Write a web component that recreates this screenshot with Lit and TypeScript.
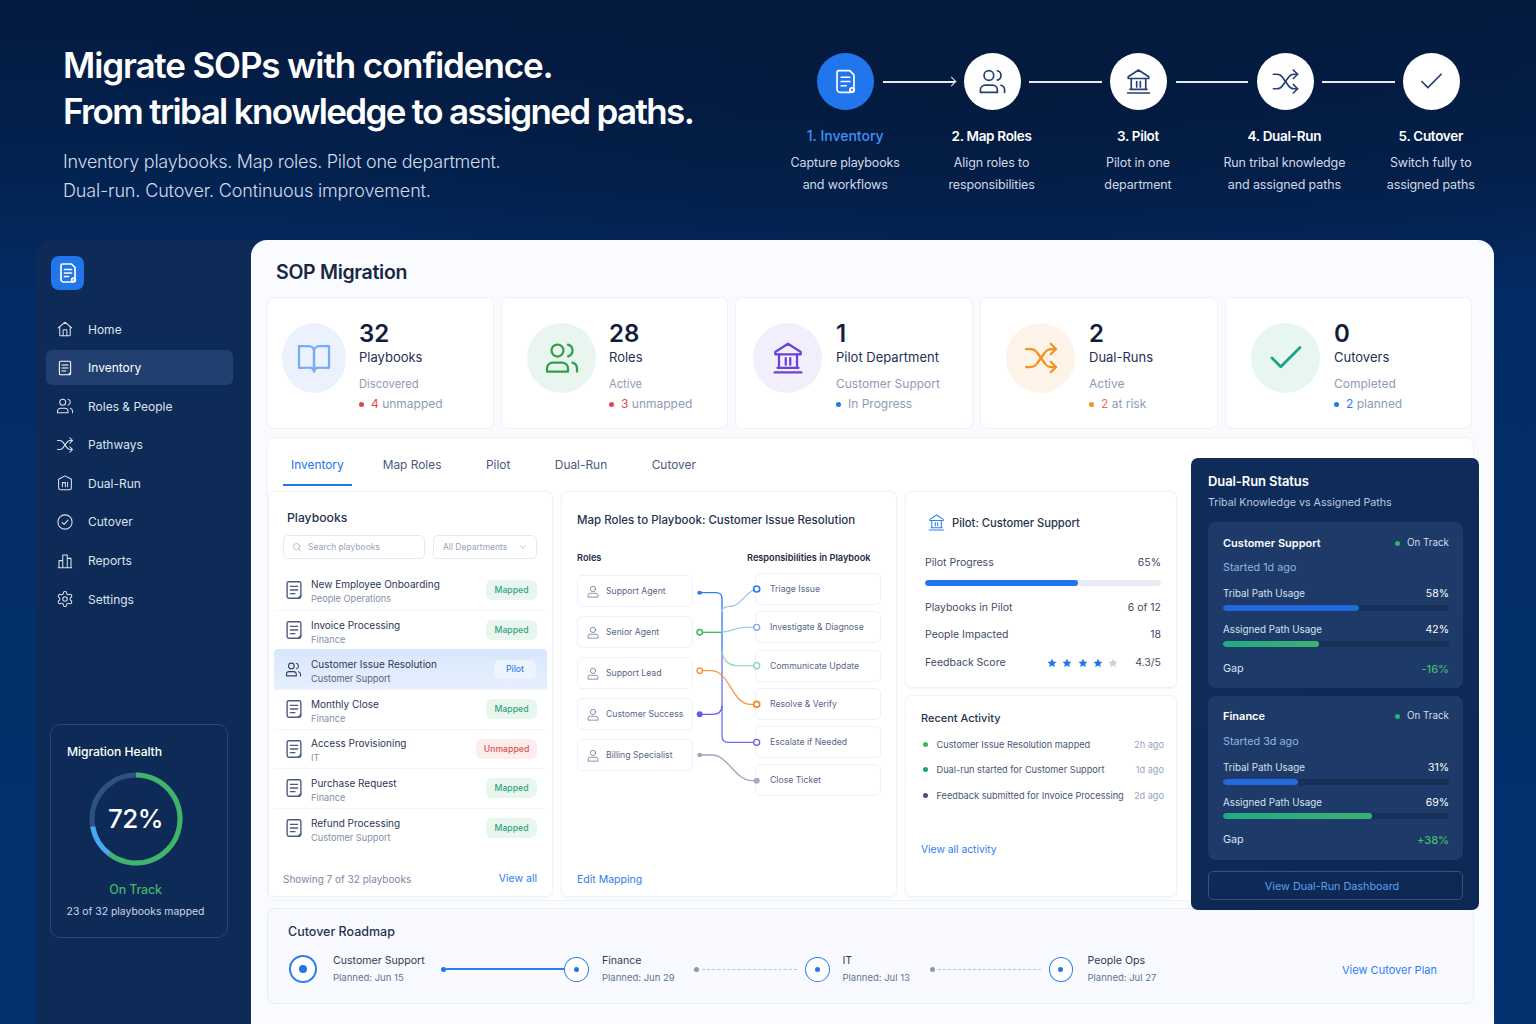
import { LitElement, html, css, svg } from "lit";
import { customElement } from "lit/decorators.js";

const ic = {
  doc: svg`<path d="M6.5 3h9l3.5 3.5V18a3 3 0 0 1-3 3H7.500a2.500 2.500 0 0 1-2.500-2.500V4.500A1.500 1.500 0 0 1 6.500 3z"/><path d="M8.500 8.500h7M8.500 12h7M8.500 15.500h4"/><circle cx="17.500" cy="19" r="1.800"/>`,
  list: svg`<rect x="4.500" y="3" width="15" height="18" rx="1.800"/><path d="M8 8h8M8 12h8M8 16h5"/><path d="M17 20.500l2.500-2.500"/>`,
  users: svg`<path d="M16 21v-2a4 4 0 0 0-4-4H6a4 4 0 0 0-4 4v2z"/><circle cx="9" cy="7" r="4"/><path d="M22 21v-2a4 4 0 0 0-3-3.870"/><path d="M16 3.130a4 4 0 0 1 0 7.750"/>`,
  bank2: svg`<path d="M12 2.500 3.500 8v1.500h17V8z"/><path d="M3 21.500h18M5 18.500h14M6 9.500v9M18 9.500v9M10.500 12v4.500M13.500 12v4.500"/>`,
  shuffle: svg`<path d="M2 6h3c2 0 3.500 1 4.500 2.500l5 7c1 1.500 2.500 2.500 4.500 2.500h3"/><path d="M2 18h3c2 0 3.500-1 4.500-2.500l5-7C15.500 7 17 6 19 6h3"/><path d="m18.500 2.500 3.500 3.500-3.500 3.500"/><path d="m18.500 14.500 3.500 3.500-3.500 3.500"/>`,
  check: svg`<path d="M20 6 9 17l-5-5"/>`,
  home: svg`<path d="M3 10.500 12 3l9 7.500"/><path d="M5 9v11a1 1 0 0 0 1 1h12a1 1 0 0 0 1-1V9"/><path d="M9.500 21v-7a1 1 0 0 1 1-1h3a1 1 0 0 1 1 1v7"/>`,
  book: svg`<path d="M2 4h6.500A3.500 3.500 0 0 1 12 7.500V21a3 3 0 0 0-3-2.500H2z"/><path d="M22 4h-6.500A3.500 3.500 0 0 0 12 7.500V21a3 3 0 0 1 3-2.500h7z"/>`,
  cycle: svg`<circle cx="12" cy="12" r="9.500"/><path d="m8 12.500 2.800 2.800L16 9.500"/>`,
  bars: svg`<path d="M3 21h18M4 21V11.500h5V21M9 21V4h6v17M15 21V8.500h5V21"/>`,
  dual: svg`<path d="M12 2.500 20.500 7v11.500a2.500 2.500 0 0 1-2.500 2.500H6a2.500 2.500 0 0 1-2.500-2.500V7z"/><path d="M8.500 17v-5.500h4V17M15.500 11v6"/>`,
  gear: svg`<path d="M12.220 2h-.44a2 2 0 0 0-2 2v.18a2 2 0 0 1-1 1.730l-.43.25a2 2 0 0 1-2 0l-.15-.08a2 2 0 0 0-2.730.73l-.22.38a2 2 0 0 0 .73 2.730l.15.1a2 2 0 0 1 1 1.720v.51a2 2 0 0 1-1 1.740l-.15.09a2 2 0 0 0-.73 2.730l.22.38a2 2 0 0 0 2.730.73l.15-.08a2 2 0 0 1 2 0l.43.25a2 2 0 0 1 1 1.730V20a2 2 0 0 0 2 2h.44a2 2 0 0 0 2-2v-.18a2 2 0 0 1 1-1.730l.43-.25a2 2 0 0 1 2 0l.15.08a2 2 0 0 0 2.730-.73l.22-.39a2 2 0 0 0-.73-2.730l-.15-.08a2 2 0 0 1-1-1.740v-.5a2 2 0 0 1 1-1.740l.15-.09a2 2 0 0 0 .73-2.730l-.22-.38a2 2 0 0 0-2.730-.73l-.15.08a2 2 0 0 1-2 0l-.43-.25a2 2 0 0 1-1-1.730V4a2 2 0 0 0-2-2z"/><circle cx="12" cy="12" r="3"/>`,
  search: svg`<circle cx="11" cy="11" r="7.500"/><path d="m21 21-4.500-4.500"/>`,
  chev: svg`<path d="m6 9 6 6 6-6"/>`,
  user: svg`<circle cx="12" cy="7.500" r="4.500"/><path d="M3.500 21v-2.500A3.500 3.500 0 0 1 7 15h10a3.500 3.500 0 0 1 3.500 3.500V21z"/>`,
};

const icon = (p: unknown, cls = "") =>
  html`<svg class="i ${cls}" viewBox="0 0 24 24" fill="none" stroke="currentColor" stroke-linecap="round" stroke-linejoin="round">${p}</svg>`;

const steps = [
  { i: ic.doc, t: "1. Inventory", a: "Capture playbooks", b: "and workflows", on: true },
  { i: ic.users, t: "2. Map Roles", a: "Align roles to", b: "responsibilities" },
  { i: ic.bank2, t: "3. Pilot", a: "Pilot in one", b: "department" },
  { i: ic.shuffle, t: "4. Dual-Run", a: "Run tribal knowledge", b: "and assigned paths" },
  { i: ic.check, t: "5. Cutover", a: "Switch fully to", b: "assigned paths" },
];
const nav = [
  { i: ic.home, t: "Home" },
  { i: ic.list, t: "Inventory", on: true },
  { i: ic.users, t: "Roles & People" },
  { i: ic.shuffle, t: "Pathways" },
  { i: ic.dual, t: "Dual-Run" },
  { i: ic.cycle, t: "Cutover" },
  { i: ic.bars, t: "Reports" },
  { i: ic.gear, t: "Settings" },
];
const stats = [
  { i: ic.book, c: "blue", n: "32", l: "Playbooks", s: "Discovered", d: "red", v: "4", r: " unmapped", vc: "red" },
  { i: ic.users, c: "green", n: "28", l: "Roles", s: "Active", d: "red", v: "3", r: " unmapped", vc: "red" },
  { i: ic.bank2, c: "purple", n: "1", l: "Pilot Department", s: "Customer Support", d: "blue", v: "", r: "In Progress", vc: "" },
  { i: ic.shuffle, c: "orange", n: "2", l: "Dual-Runs", s: "Active", d: "orange", v: "2", r: " at risk", vc: "coral" },
  { i: ic.check, c: "teal", n: "0", l: "Cutovers", s: "Completed", d: "blue", v: "2", r: " planned", vc: "blue" },
];
const books = [
  { n: "New Employee Onboarding", s: "People Operations", b: "Mapped" },
  { n: "Invoice Processing", s: "Finance", b: "Mapped" },
  { n: "Customer Issue Resolution", s: "Customer Support", b: "Pilot", on: true },
  { n: "Monthly Close", s: "Finance", b: "Mapped" },
  { n: "Access Provisioning", s: "IT", b: "Unmapped" },
  { n: "Purchase Request", s: "Finance", b: "Mapped" },
  { n: "Refund Processing", s: "Customer Support", b: "Mapped" },
];
const roles = ["Support Agent", "Senior Agent", "Support Lead", "Customer Success", "Billing Specialist"];
const resp = ["Triage Issue", "Investigate & Diagnose", "Communicate Update", "Resolve & Verify", "Escalate if Needed", "Close Ticket"];
const activity = [
  { t: "Customer Issue Resolution mapped", a: "2h ago", c: "green" },
  { t: "Dual-run started for Customer Support", a: "1d ago", c: "teal" },
  { t: "Feedback submitted for Invoice Processing", a: "2d ago", c: "navy" },
];
const runs = [
  { n: "Customer Support", s: "Started 1d ago", tv: "58%", tw: 60, av: "42%", aw: 42.5, g: "-16%", tight: false },
  { n: "Finance", s: "Started 3d ago", tv: "31%", tw: 33, av: "69%", aw: 66, g: "+38%", tight: true },
];

@customElement("app-root")
export class AppRoot extends LitElement {
  static styles = css`
    :host { display: block; width: 1536px; height: 1024px; overflow: hidden; font-family: Inter, "Liberation Sans", sans-serif; color: #1c2744; }
    * { box-sizing: border-box; }
    .page { width: 1536px; height: 1024px; overflow: hidden; background: radial-gradient(ellipse 900px 260px at 1000px 60px, #041a3e 0%, rgba(4,26,62,0) 100%), linear-gradient(180deg, #041a3f 0%, #03224f 16%, #032c66 30%, #03326f 100%); }
    .i { display: block; stroke-width: 1.6; flex: none; }

    .hero { height: 240px; display: flex; justify-content: space-between; padding-left: 63px; padding-right: 32px; }
    .intro { padding-top: 42px; white-space: nowrap; }
    h1 { margin: 0; font-size: 35px; line-height: 46px; font-weight: 600; color: #fff; letter-spacing: -1.65px; }
    h1 span { letter-spacing: -1.13px; }
    .lead { margin: 12.5px 0 0; font-size: 18px; line-height: 29px; font-weight: 300; color: #d0dbea; letter-spacing: -0.26px; }
    .lead span { letter-spacing: -0.14px; }
    .flow { width: 732px; padding-top: 53px; flex: none; }
    .dots { width: 643px; margin-left: 45px; display: flex; align-items: center; }
    .circle { width: 57px; height: 57px; border-radius: 50%; background: #fff; color: #27406f; display: flex; align-items: center; justify-content: center; flex: none; }
    .circle.on { background: #2176ee; color: #fff; }
    .circle .i { width: 29px; height: 29px; stroke-width: 1.4; }
    .conn { flex: 1; height: 2px; background: #e4e9f2; margin: 0 8.500px; position: relative; }
    .conn.arrow::after { content: ""; position: absolute; right: 0; top: -2.500px; width: 6px; height: 6px; border-top: 1.500px solid #e4e9f2; border-right: 1.500px solid #e4e9f2; transform: rotate(45deg); }
    .labels { display: grid; grid-template-columns: repeat(5, 146.400px); margin-top: 15.500px; text-align: center; }
    .lt { font-size: 13.500px; line-height: 20px; font-weight: 600; color: #fff; letter-spacing: -0.3px; }
    .lt.on { color: #3f93f5; font-weight: 500; font-size: 14px; letter-spacing: 0; }
    .ld { margin-top: 6px; font-size: 12.500px; line-height: 22px; color: #d0d9e8; font-weight: 400; letter-spacing: -0.12px; }

    .main { display: flex; height: 784px; padding-left: 36px; }
    .side { width: 231px; margin-right: -16px; background: #0e2a56; border-radius: 14px 0 0 0; padding: 16px 0 0 10px; flex: none; }
    .logo { width: 33px; height: 34px; margin-left: 5px; border-radius: 8px; background: #2176ee; color: #fff; display: flex; align-items: center; justify-content: center; }
    .logo .i { width: 24px; height: 24px; stroke-width: 1.7; }
    .nav { margin-top: 21.500px; width: 187px; display: flex; flex-direction: column; gap: 3.600px; }
    .ni { height: 35px; display: flex; align-items: center; gap: 14px; padding-left: 10px; border-radius: 6px; color: #dbe3f0; font-size: 12px; }
    .ni.on { background: #21406f; color: #fff; }
    .ni .i { width: 18px; height: 18px; stroke-width: 1.400; }
    .health { width: 178px; height: 214px; margin: 107.200px 0 0 4px; border: 1px solid #2a4673; border-radius: 10px; padding: 17px 23px 0 16px; display: flex; flex-direction: column; align-items: center; }
    .ht { align-self: flex-start; font-size: 12.200px; line-height: 20px; font-weight: 500; color: #fff; letter-spacing: -0.1px; }
    .ring { width: 94px; height: 94px; margin-top: 10px; display: grid; place-items: center; }
    .ring > * { grid-area: 1 / 1; }
    .ring b { font-size: 26px; font-weight: 500; color: #fff; letter-spacing: -0.5px; }
    .ok { margin-top: 15px; font-size: 12.500px; line-height: 18px; color: #3fb568; font-weight: 500; letter-spacing: -0.2px; }
    .hs { margin-top: 5px; font-size: 10.400px; line-height: 16px; color: #cdd7e6; white-space: nowrap; }

    .panel { width: 1243px; height: 800px; background: #f9fbfe; border-radius: 16px 16px 0 0; padding: 18px 21px 0 17px; position: relative; flex: none; }
    h2 { margin: 0 0 0 8px; font-size: 19.500px; line-height: 28px; font-weight: 600; color: #1a2744; letter-spacing: -0.3px; }
    .stats { margin-top: 12px; display: grid; grid-template-columns: 225px 225px 236px 236px 245px; gap: 9px; }
    .stat { height: 130px; background: #fff; border-radius: 6px; box-shadow: 0 0 0 1px #eff2f8; display: flex; gap: 14px; padding-left: 25px; }
    .stat:nth-child(1) { padding-left: 14px; gap: 13px; }
    .stat:nth-child(2) { gap: 13px; }
    .stat:nth-child(3) { padding-left: 17px; }
    .blob { width: 69px; height: 70px; margin-top: 25px; border-radius: 50%; display: flex; align-items: center; justify-content: center; flex: none; }
    .stat:nth-child(1) .blob { width: 64px; }
    .blob .i { width: 36px; height: 36px; stroke-width: 1.500; }
    .stat:nth-child(5) .blob .i { width: 42px; height: 42px; stroke-width: 1.600; }
    .blob.blue { background: #ebf2fd; color: #78aaf7; }
    .blob.green { background: #e9f6ef; color: #2f9f48; }
    .blob.purple { background: #f2effc; color: #6b41da; }
    .blob.orange { background: #fef3e8; color: #f2931f; }
    .blob.teal { background: #e8f6f2; color: #1ba383; }
    .st { padding-top: 22px; }
    .sn { font-size: 24px; line-height: 28px; font-weight: 600; color: #121c3d; }
    .sl { font-size: 13px; line-height: 18px; color: #26314f; }
    .ss { margin-top: 10px; font-size: 12px; line-height: 16px; color: #8f9bb6; }
    .stat:nth-child(1) .ss, .stat:nth-child(2) .ss { font-size: 11.200px; }
    .sr { margin-top: 4px; font-size: 12px; line-height: 16px; color: #8f9bb6; display: flex; align-items: center; white-space: pre; }
    .dot { width: 5px; height: 5px; border-radius: 50%; flex: none; }
    .sr .dot { margin-right: 7px; }
    .dot.red { background: #e0474c; } .dot.blue { background: #2176ee; } .dot.orange { background: #f2931f; }
    .dot.green { background: #3fb55f; } .dot.teal { background: #1ba383; } .dot.navy { background: #43527e; }
    .v-red { color: #e0474c; } .v-coral { color: #ef6a5c; } .v-blue { color: #2f7df0; }

    .work { margin-top: 10px; height: 462px; background: #fff; border-radius: 6px; box-shadow: 0 0 0 1px #eff2f8; display: flex; width: 1205px; }
    .wl { width: 909px; flex: none; }
    .tabs { height: 53px; padding-left: 15px; display: flex; gap: 28.500px; align-items: flex-start; }
    .tab { height: 48px; padding: 6px 8px 0; display: flex; align-items: center; font-size: 11.900px; color: #4c5a7d; border-bottom: 2px solid transparent; }
    .tab:first-child { margin-right: -5.500px; }
    .tab.on { color: #2176ee; border-bottom-color: #2176ee; }
    .cols { display: grid; grid-template-columns: 285px 336px 272px; gap: 8px; height: 406px; }
    .card { background: #fff; border: 1px solid #eff2f8; border-radius: 6px; box-shadow: 0 1px 3px rgba(40,60,110,.05); }
    .pb { display: flex; flex-direction: column; padding: 17px 15px 9px 14px; }
    .pt { margin-left: 4px; font-size: 12.200px; line-height: 18px; font-weight: 500; color: #27324f; }
    .filters { margin-top: 8px; display: flex; gap: 8px; }
    .fld { height: 24px; border: 1px solid #e5e9f2; border-radius: 5px; display: flex; align-items: center; font-size: 8.500px; color: #98a3ba; background: #fff; }
    .fld.s { width: 142px; padding-left: 8px; gap: 6px; }
    .fld.d { flex: 1; padding: 0 8px 0 9px; justify-content: space-between; }
    .fld .i { width: 10px; height: 10px; color: #98a3ba; }
    .rows { margin-top: 11.200px; }
    .row { height: 39.600px; margin: 0 -10px 0 -9px; padding: 0 10px 0 9px; display: flex; align-items: center; gap: 6px; border-top: 1px solid #f4f6fa; color: #4c5a85; }
    .row:first-child { border-top: none; }
    .row.on { background: linear-gradient(180deg, #d8e7fd, #e6effd); border-radius: 4px 4px 0 0; border-top: none; color: #33415f; padding-right: 11px; }
    .row .i { width: 22px; height: 22px; stroke-width: 1.500; }
    .row.on .i { width: 17px; height: 17px; margin: 0 3px 0 2px; }
    .rt { flex: 1; min-width: 0; padding-top: 3px; }
    .rn { font-size: 10px; line-height: 14px; color: #2c3754; }
    .rs { margin-top: 1px; font-size: 9.200px; line-height: 13px; color: #8490a8; }
    .row.on .rs { color: #56627e; }
    .badge { height: 20px; width: 51px; border-radius: 6px; font-size: 8.700px; font-weight: 500; display: flex; align-items: center; justify-content: center; background: #e9f6f0; color: #2fa57a; flex: none; }
    .badge.Unmapped { width: 61px; background: #fdeeee; color: #d9534f; }
    .badge.Pilot { width: 42px; height: 19px; background: #eef4fe; color: #2f7df0; }
    .foot { margin-top: auto; display: flex; justify-content: space-between; font-size: 10px; line-height: 16px; color: #7c88a3; }
    .foot a { font-size: 10.500px; }
    a { color: #2f7df0; text-decoration: none; }

    .mp { display: flex; flex-direction: column; padding: 20px 15px 8px; }
    .mt { font-size: 11.500px; line-height: 16px; font-weight: 500; color: #27324f; white-space: nowrap; }
    .mh { margin-top: 24px; display: grid; grid-template-columns: 170px auto; font-size: 9.200px; line-height: 12px; font-weight: 600; color: #1f2a47; white-space: nowrap; }
    .diag { margin-top: 9px; display: grid; grid-template-columns: 116px 62px 126px; }
    .mc { display: flex; flex-direction: column; }
    .mc.r { padding-top: 2px; gap: 9px; }
    .mc.q { gap: 6.300px; }
    .box { height: 32px; border: 1px solid #eef1f7; border-radius: 5px; display: flex; align-items: center; font-size: 8.700px; color: #59668a; background: #fff; white-space: nowrap; }
    .mc.r .box { padding-left: 8px; gap: 6px; }
    .mc.r .i { width: 14px; height: 15px; color: #6e7ca0; stroke-width: 1.400; }
    .mc.q .box { padding-left: 14px; }
    .diag svg { position: relative; z-index: 1; overflow: visible; display: block; }
    .mp .lnk { margin-top: auto; font-size: 10.500px; line-height: 16px; }

    .stack { display: flex; flex-direction: column; gap: 7px; }
    .pl { height: 197px; padding: 21px 15px 0 19px; }
    .ph { display: flex; align-items: center; gap: 6px; font-size: 11.200px; line-height: 16px; font-weight: 500; color: #27324f; padding-left: 2px; }
    .ph .i { width: 19px; height: 19px; color: #2f7df0; stroke-width: 1.300; }
    .kv { display: flex; justify-content: space-between; align-items: center; font-size: 10.500px; line-height: 14px; color: #3f4b68; }
    .kv.first { margin-top: 24px; }
    .pbar { margin-top: 10px; height: 6px; border-radius: 3px; background: #e8ebf3; overflow: hidden; }
    .pbar i { display: block; height: 100%; background: #2176ee; border-radius: 3px; }
    .kv.m { margin-top: 13.300px; }
    .kv.m1 { margin-top: 15px; }
    .kvr { display: flex; align-items: center; }
    .stars { display: flex; gap: 5.300px; margin-right: 17px; }
    .stars svg { width: 10px; height: 10px; display: block; fill: #2176ee; }
    .stars svg.off { fill: #c9d0de; }
    .ra { flex: 1; padding: 13.500px 12px 0 15px; }
    .rat { font-size: 11px; line-height: 16px; font-weight: 500; color: #27324f; }
    .ral { margin-top: 12px; display: flex; flex-direction: column; gap: 12.500px; }
    .rar { display: flex; align-items: center; font-size: 9.200px; line-height: 13px; color: #4a5675; white-space: nowrap; }
    .rar .dot { margin: 0 9px 0 1.500px; width: 5px; height: 5px; }
    .rar span:last-child { margin-left: auto; color: #98a3ba; }
    .ra .lnk { display: block; margin-top: 40.500px; font-size: 10.300px; line-height: 14px; }

    .dr { width: 288px; height: 452px; margin: 20px -6px -10px 14px; flex: none; background: linear-gradient(160deg, #0f2c5b, #0d2853); border-radius: 7px; padding: 14px 16px 0 17px; color: #fff; }
    .dt { font-size: 13px; line-height: 18px; font-weight: 600; letter-spacing: -0.1px; }
    .dsub { margin-top: 6px; font-size: 10.700px; line-height: 14px; color: #bcc9de; }
    .rc { height: 166px; margin-top: 12px; background: #1e3a68; border-radius: 8px; padding: 14px 14px 0 15px; }
    .rc.tight { height: 164px; margin-top: 8px; padding-top: 13px; }
    .rch { display: flex; justify-content: space-between; align-items: center; font-size: 11px; line-height: 14px; font-weight: 600; }
    .rch span { display: flex; align-items: center; gap: 7px; font-size: 9.800px; font-weight: 400; color: #d4dceb; }
    .rch .dot { background: #23b96a; }
    .rcs { margin-top: 11px; font-size: 10.800px; line-height: 14px; color: #8fb6e0; }
    .tight .rcs { margin-top: 12px; }
    .rkv { display: flex; justify-content: space-between; font-size: 9.800px; line-height: 14px; color: #d8e1ef; }
    .rkv.a { margin-top: 12px; } .rkv.b { margin-top: 12px; } .rkv.c { margin-top: 15px; font-size: 10.800px; }
    .tight .rkv.b { margin-top: 11px; } .tight .rkv.c { margin-top: 14px; }
    .rkv b { font-weight: 400; color: #fff; font-size: 10.500px; }
    .rkv b.gap { color: #44bd6e; font-weight: 500; font-size: 11px; }
    .rb { margin-top: 4px; height: 6px; border-radius: 3px; background: #182f58; overflow: hidden; }
    .tight .rb.g { margin-top: 3px; }
    .rb i { display: block; height: 100%; border-radius: 3px; background: #2469dc; }
    .rb.g i { background: linear-gradient(90deg, #20ab85, #3fb070); }
    .btn { margin-top: 11px; height: 29px; border: 1px solid #2f5488; border-radius: 5px; display: flex; align-items: center; justify-content: center; padding: 1px 7px 0 0; font-size: 10.800px; color: #5ba3f0; }

    .road { margin-top: 9px; width: 1205px; height: 94px; background: #f8faff; border-radius: 6px; box-shadow: 0 0 0 1px #e9eef7; padding: 14px 36px 0 20px; }
    .rdt { font-size: 12.500px; line-height: 18px; font-weight: 500; color: #27324f; }
    .rdr { margin-top: 10px; height: 36px; display: flex; align-items: center; }
    .nd { width: 24.500px; height: 25px; border: 1.500px solid #2f7df0; border-radius: 50%; display: flex; align-items: center; justify-content: center; flex: none; background: #fff; }
    .nd::after { content: ""; width: 5px; height: 5px; border-radius: 50%; background: #2176ee; }
    .nd.big { width: 28px; height: 28px; margin-left: 1px; border-width: 2px; }
    .nd.big::after { width: 8px; height: 8px; }
    .stp { flex: none; }
    .stp.a { margin-left: 16px; width: 108px; }
    .stp.b { margin-left: 13.500px; width: 92px; }
    .stp.c { margin-left: 13px; width: 87px; }
    .stp.d { margin-left: 14.500px; }
    .sp { font-size: 10.600px; line-height: 14px; color: #2f3a57; white-space: nowrap; }
    .sq { margin-top: 3px; font-size: 9.500px; line-height: 14px; color: #66728f; white-space: nowrap; }
    .lk { flex: none; display: flex; align-items: center; }
    .lk .p { width: 5px; height: 5px; border-radius: 50%; background: #2176ee; flex: none; }
    .lk .l { flex: 1; height: 1.500px; background: #2f7df0; }
    .lk.x .p { background: #8d98b1; }
    .lk.x .l { height: 0; background: none; border-top: 1px dashed #bcc5d6; margin-left: 3px; margin-right: 8px; }
    .lk.w1 { width: 123px; } .lk.w2 { width: 111px; } .lk.w3 { width: 119px; }
    .vp { margin-left: auto; padding-top: 1px; font-size: 11px; }
  `;

  private star(off = false) {
    return html`<svg class=${off ? "off" : ""} viewBox="0 0 24 24"><path d="M12 1.500l3.200 6.900 7.500.9-5.500 5.100 1.500 7.400L12 18.100l-6.700 3.700 1.500-7.400L1.300 9.300l7.500-.9z"/></svg>`;
  }

  render() {
    return html`<div class="page">
      <section class="hero">
        <div class="intro">
          <h1><span>Migrate SOPs with confidence.</span><br />From tribal knowledge to assigned paths.</h1>
          <p class="lead">Inventory playbooks. Map roles. Pilot one department.<br /><span>Dual-run. Cutover. Continuous improvement.</span></p>
        </div>
        <div class="flow">
          <div class="dots">
            ${steps.map((s, i) => html`
              ${i ? html`<div class="conn ${i === 1 ? "arrow" : ""}"></div>` : ""}
              <div class="circle ${s.on ? "on" : ""}">${icon(s.i)}</div>`)}
          </div>
          <div class="labels">
            ${steps.map((s) => html`<div>
              <div class="lt ${s.on ? "on" : ""}">${s.t}</div>
              <div class="ld">${s.a}<br />${s.b}</div>
            </div>`)}
          </div>
        </div>
      </section>

      <div class="main">
        <aside class="side">
          <div class="logo">${icon(ic.doc)}</div>
          <nav class="nav">
            ${nav.map((n) => html`<div class="ni ${n.on ? "on" : ""}">${icon(n.i)}<span>${n.t}</span></div>`)}
          </nav>
          <div class="health">
            <div class="ht">Migration Health</div>
            <div class="ring">
              <svg width="94" height="94" viewBox="0 0 94 94">
                <circle cx="47" cy="47" r="44" fill="none" stroke="#2c5282" stroke-width="5" />
                <path d="M47 3A44 44 0 1 1 20.500 82.100" fill="none" stroke="#3fb568" stroke-width="5" />
                <path d="M20.500 82.100A44 44 0 0 1 3.700 54.600" fill="none" stroke="#4aa8ef" stroke-width="5" />
              </svg>
              <b>72%</b>
            </div>
            <div class="ok">On Track</div>
            <div class="hs">23 of 32 playbooks mapped</div>
          </div>
        </aside>

        <main class="panel">
          <h2>SOP Migration</h2>
          <div class="stats">
            ${stats.map((s) => html`<div class="stat">
              <div class="blob ${s.c}">${icon(s.i)}</div>
              <div class="st">
                <div class="sn">${s.n}</div>
                <div class="sl">${s.l}</div>
                <div class="ss">${s.s}</div>
                <div class="sr"><span class="dot ${s.d}"></span>${s.v ? html`<span class="v-${s.vc}">${s.v}</span>` : ""}${s.r}</div>
              </div>
            </div>`)}
          </div>

          <div class="work">
            <div class="wl">
              <div class="tabs">
                ${["Inventory", "Map Roles", "Pilot", "Dual-Run", "Cutover"].map((t, i) => html`<div class="tab ${i === 0 ? "on" : ""}">${t}</div>`)}
              </div>
              <div class="cols">
                <div class="card pb">
                  <div class="pt">Playbooks</div>
                  <div class="filters">
                    <div class="fld s">${icon(ic.search)}<span>Search playbooks</span></div>
                    <div class="fld d"><span>All Departments</span>${icon(ic.chev)}</div>
                  </div>
                  <div class="rows">
                    ${books.map((b) => html`<div class="row ${b.on ? "on" : ""}">
                      ${icon(b.on ? ic.users : ic.list)}
                      <div class="rt"><div class="rn">${b.n}</div><div class="rs">${b.s}</div></div>
                      <div class="badge ${b.b}">${b.b}</div>
                    </div>`)}
                  </div>
                  <div class="foot"><span>Showing 7 of 32 playbooks</span><a>View all</a></div>
                </div>

                <div class="card mp">
                  <div class="mt">Map Roles to Playbook: Customer Issue Resolution</div>
                  <div class="mh"><span>Roles</span><span>Responsibilities in Playbook</span></div>
                  <div class="diag">
                    <div class="mc r">${roles.map((r) => html`<div class="box">${icon(ic.user)}<span>${r}</span></div>`)}</div>
                    <svg width="62" height="224" viewBox="693 573 62 224" fill="none" stroke-width="1.300">
                      <path d="M700 592.700H716q6 0 6 6V650" stroke="#2f7df0" />
                      <path d="M722 650V736q0 6.300 6 6.300H757" stroke="#6a6fe8" />
                      <path d="M722 612C722 606 728 607 733 606C742 604 748 589 757 589" stroke="#a9c8f7" />
                      <path d="M722 632C732 632 735 627.300 745 627.300H757" stroke="#a9c8f7" />
                      <path d="M722 652C724 662 730 665.700 738 665.700H757" stroke="#9fd6bb" />
                      <path d="M700 632.300H722" stroke="#3fb55f" />
                      <path d="M700 670.700H712C730 672 732 704 750 704.300H757" stroke="#f49a3c" />
                      <path d="M700 714.300H712C718 714.300 722 712 722 706" stroke="#5f5fe0" />
                      <path d="M700 755H712C728 755 735 780.700 752 780.700H757" stroke="#9aa5bb" />
                      <ellipse cx="699.700" cy="592.700" rx="2.500" ry="2" fill="#2f7df0" />
                      <circle cx="699.700" cy="632.300" r="2.700" fill="#fff" stroke="#3fb55f" stroke-width="1.500" />
                      <circle cx="699.700" cy="670.700" r="2.700" fill="#fff" stroke="#f49a3c" stroke-width="1.500" />
                      <circle cx="699.700" cy="714.300" r="3" fill="#5f5fe0" />
                      <circle cx="699.700" cy="755" r="2.300" fill="#9aa5bb" />
                      <circle cx="756.700" cy="589" r="3" fill="#fff" stroke="#2f7df0" stroke-width="1.700" />
                      <circle cx="756.700" cy="627.300" r="3" fill="#fff" stroke="#7aa9f4" stroke-width="1.300" />
                      <circle cx="756.700" cy="665.700" r="3" fill="#fff" stroke="#8fd0b0" stroke-width="1.300" />
                      <circle cx="756.700" cy="704.300" r="3" fill="#fff" stroke="#f28a24" stroke-width="1.700" />
                      <circle cx="756.700" cy="742.300" r="3" fill="#fff" stroke="#6a5fe0" stroke-width="1.300" />
                      <circle cx="756.700" cy="780.700" r="3" fill="#a3adc2" />
                    </svg>
                    <div class="mc q">${resp.map((r) => html`<div class="box">${r}</div>`)}</div>
                  </div>
                  <a class="lnk">Edit Mapping</a>
                </div>

                <div class="stack">
                  <div class="card pl">
                    <div class="ph">${icon(ic.bank2)}<span>Pilot: Customer Support</span></div>
                    <div class="kv first"><span>Pilot Progress</span><span>65%</span></div>
                    <div class="pbar"><i style="width:65%"></i></div>
                    <div class="kv m1"><span>Playbooks in Pilot</span><span>6 of 12</span></div>
                    <div class="kv m"><span>People Impacted</span><span>18</span></div>
                    <div class="kv m"><span>Feedback Score</span>
                      <span class="kvr"><span class="stars">${this.star()}${this.star()}${this.star()}${this.star()}${this.star(true)}</span>4.3/5</span>
                    </div>
                  </div>
                  <div class="card ra">
                    <div class="rat">Recent Activity</div>
                    <div class="ral">
                      ${activity.map((a) => html`<div class="rar"><i class="dot ${a.c}"></i><span>${a.t}</span><span>${a.a}</span></div>`)}
                    </div>
                    <a class="lnk">View all activity</a>
                  </div>
                </div>
              </div>
            </div>

            <div class="dr">
              <div class="dt">Dual-Run Status</div>
              <div class="dsub">Tribal Knowledge vs Assigned Paths</div>
              ${runs.map((r) => html`<div class="rc ${r.tight ? "tight" : ""}">
                <div class="rch">${r.n}<span><i class="dot"></i>On Track</span></div>
                <div class="rcs">${r.s}</div>
                <div class="rkv a"><span>Tribal Path Usage</span><b>${r.tv}</b></div>
                <div class="rb"><i style="width:${r.tw}%"></i></div>
                <div class="rkv b"><span>Assigned Path Usage</span><b>${r.av}</b></div>
                <div class="rb g"><i style="width:${r.aw}%"></i></div>
                <div class="rkv c"><span>Gap</span><b class="gap">${r.g}</b></div>
              </div>`)}
              <div class="btn">View Dual-Run Dashboard</div>
            </div>
          </div>

          <div class="road">
            <div class="rdt">Cutover Roadmap</div>
            <div class="rdr">
              <div class="nd big"></div>
              <div class="stp a"><div class="sp">Customer Support</div><div class="sq">Planned: Jun 15</div></div>
              <div class="lk w1"><span class="p"></span><span class="l"></span></div>
              <div class="nd"></div>
              <div class="stp b"><div class="sp">Finance</div><div class="sq">Planned: Jun 29</div></div>
              <div class="lk x w2"><span class="p"></span><span class="l"></span></div>
              <div class="nd"></div>
              <div class="stp c"><div class="sp">IT</div><div class="sq">Planned: Jul 13</div></div>
              <div class="lk x w3"><span class="p"></span><span class="l"></span></div>
              <div class="nd"></div>
              <div class="stp d"><div class="sp">People Ops</div><div class="sq">Planned: Jul 27</div></div>
              <a class="vp">View Cutover Plan</a>
            </div>
          </div>
        </main>
      </div>
    </div>`;
  }
}
